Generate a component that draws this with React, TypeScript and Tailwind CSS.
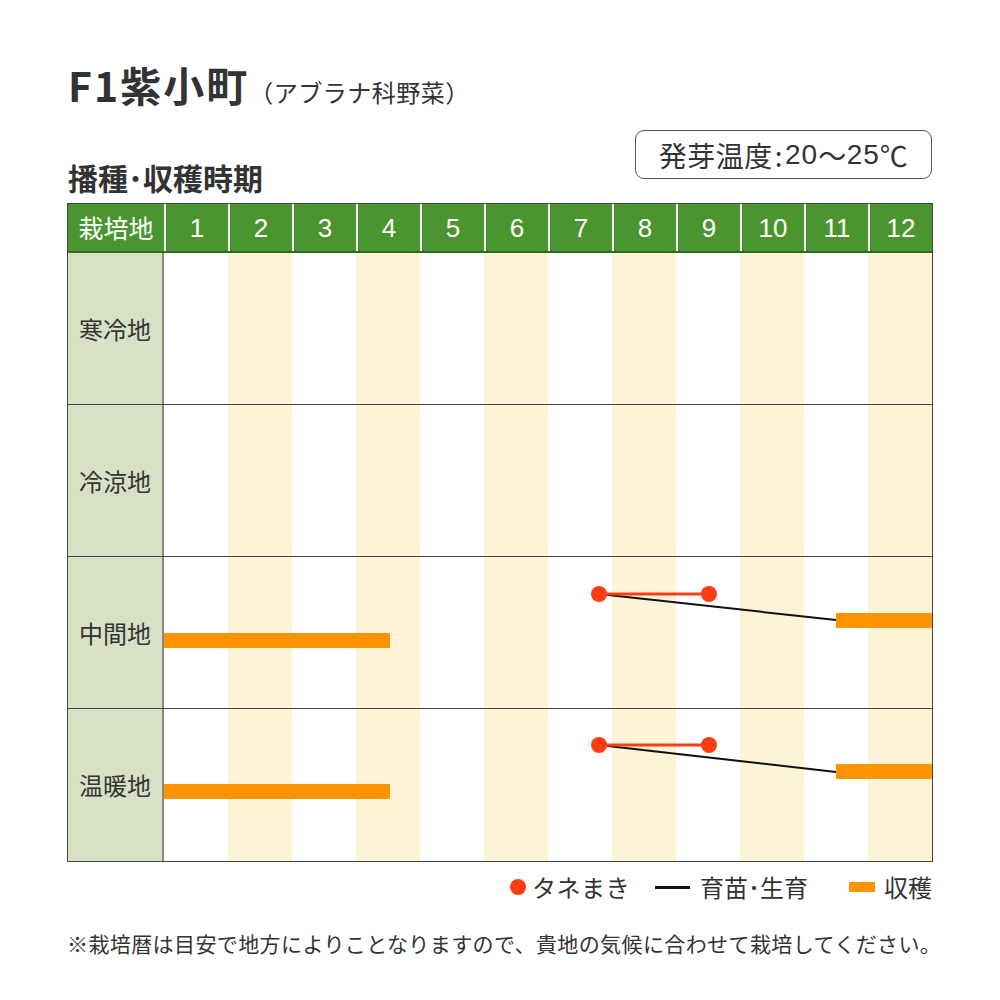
import React from "react";

const months = [1, 2, 3, 4, 5, 6, 7, 8, 9, 10, 11, 12];
const regions = ["寒冷地", "冷涼地", "中間地", "温暖地"];

export default function App() {
  return (
    <div className="w-[1000px] h-[1000px] bg-white text-[#333] font-['Noto_Sans_CJK_JP',sans-serif] pl-[67px] pt-[59px]">
      <div className="w-[866px]">
        {/* Title */}
        <div className="h-[53px] flex items-baseline">
          <span className="text-[41px] font-bold leading-[50px] tracking-[2px] ml-[1px]">F1紫小町</span>
          <span className="text-[24px] leading-[50px] tracking-[0.5px]">（アブラナ科野菜）</span>
        </div>
        {/* Subheading + badge */}
        <div className="h-[91px] flex justify-between">
          <div className="self-end pb-[7px] text-[30px] font-bold leading-[38px] ml-[1px]">
            播種･収穫時期
          </div>
          <div className="mt-[18px] h-[49px] w-[297px] border border-[#555] rounded-[9px] flex items-center justify-center text-[28px] leading-none mr-[1px] tracking-[0.5px]">
            <span>発芽温度</span>
            <span className="mx-[2px]">:</span>
            <span className="font-['Liberation_Sans','Noto_Sans_CJK_JP',sans-serif] tracking-[1px]">20</span>
            <span>〜</span>
            <span className="font-['Liberation_Sans','Noto_Sans_CJK_JP',sans-serif] tracking-[1px]">25</span>
            <span>℃</span>
          </div>
        </div>
        {/* Table */}
        <div className="border border-[#444]">
          <div className="h-[49px] flex bg-[#4b9530] border-b-2 border-[#2f6a1c] text-white text-[25px] leading-none">
            <div className="w-[96px] flex items-center justify-center">栽培地</div>
            {months.map((m) => (
              <div
                key={m}
                className="w-[64px] border-l-2 border-white flex items-center justify-center font-['Liberation_Sans',sans-serif] text-[26px]"
              >
                {m}
              </div>
            ))}
          </div>
          <div className="relative">
            {regions.map((r, i) => (
              <div
                key={r}
                className={`h-[152px] flex ${i < 3 ? "border-b border-[#444]" : ""}`}
              >
                <div className="w-[96px] bg-[#d8e0c5] border-r-2 border-[#8a8a80] flex items-center justify-center text-[24px] leading-none">
                  {r}
                </div>
                {months.map((m) => (
                  <div
                    key={m}
                    className={`w-[64px] ${m % 2 === 0 ? "bg-[#fdf4d8]" : "bg-white"}`}
                  />
                ))}
              </div>
            ))}
            <svg
              className="absolute left-[96px] top-0"
              width="768"
              height="608"
              viewBox="0 0 768 608"
            >
              {/* 中間地 */}
              <rect x="0" y="380" width="226" height="15" fill="#ff9300" />
              <line x1="435" y1="341" x2="672" y2="367" stroke="#111" strokeWidth="2" />
              <line x1="435" y1="341" x2="545" y2="341" stroke="#ff3c14" strokeWidth="3" />
              <circle cx="435" cy="341" r="8" fill="#ff3c14" />
              <circle cx="545" cy="341" r="8" fill="#ff3c14" />
              <rect x="672" y="360" width="96" height="15" fill="#ff9300" />
              {/* 温暖地 */}
              <rect x="0" y="531" width="226" height="15" fill="#ff9300" />
              <line x1="435" y1="492" x2="672" y2="519" stroke="#111" strokeWidth="2" />
              <line x1="435" y1="492" x2="545" y2="492" stroke="#ff3c14" strokeWidth="3" />
              <circle cx="435" cy="492" r="8" fill="#ff3c14" />
              <circle cx="545" cy="492" r="8" fill="#ff3c14" />
              <rect x="672" y="511" width="96" height="15" fill="#ff9300" />
            </svg>
          </div>
        </div>
        {/* Legend */}
        <div className="mt-[12px] flex justify-end items-center text-[24px] leading-[26px] mr-[1px]">
          <div className="flex items-center">
            <span className="w-[16px] h-[16px] rounded-full bg-[#ff3c14] mr-[6px]" />
            <span className="tracking-[0.5px]">タネまき</span>
          </div>
          <div className="flex items-center ml-[25px]">
            <span className="w-[35px] h-[3px] bg-[#111] mr-[10px]" />
            <span>育苗･生育</span>
          </div>
          <div className="flex items-center ml-[41px]">
            <span className="w-[26px] h-[10px] bg-[#ff9300] mr-[9px]" />
            <span>収穫</span>
          </div>
        </div>
        {/* Footnote */}
        <div className="mt-[33px] text-[21px] leading-[21px] tracking-[0.4px] whitespace-nowrap">
          ※栽培暦は目安で地方によりことなりますので、貴地の気候に合わせて栽培してください。
        </div>
      </div>
    </div>
  );
}
